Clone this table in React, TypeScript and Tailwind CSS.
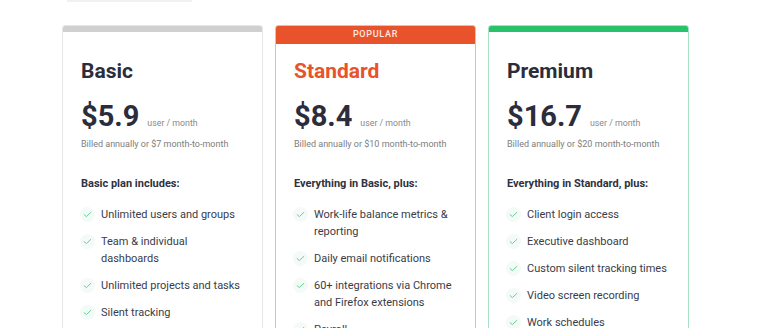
import React from "react";

type Plan = {
  name: string;
  price: string;
  billed: string;
  heading: string;
  items: string[];
  variant: "basic" | "standard" | "premium";
};

const plans: Plan[] = [
  {
    name: "Basic",
    price: "$5.9",
    billed: "Billed annually or $7 month-to-month",
    heading: "Basic plan includes:",
    items: [
      "Unlimited users and groups",
      "Team & individual dashboards",
      "Unlimited projects and tasks",
      "Silent tracking",
    ],
    variant: "basic",
  },
  {
    name: "Standard",
    price: "$8.4",
    billed: "Billed annually or $10 month-to-month",
    heading: "Everything in Basic, plus:",
    items: [
      "Work-life balance metrics & reporting",
      "Daily email notifications",
      "60+ integrations via Chrome and Firefox extensions",
      "Payroll",
    ],
    variant: "standard",
  },
  {
    name: "Premium",
    price: "$16.7",
    billed: "Billed annually or $20 month-to-month",
    heading: "Everything in Standard, plus:",
    items: [
      "Client login access",
      "Executive dashboard",
      "Custom silent tracking times",
      "Video screen recording",
      "Work schedules",
    ],
    variant: "premium",
  },
];

function Check() {
  return (
    <span className="ml-[-1px] mr-[6px] mt-[1px] flex h-[15px] w-[15px] shrink-0 items-center justify-center rounded-full bg-[#f4faf7]">
      <svg width="9" height="7" viewBox="0 0 9 7" fill="none">
        <path
          d="M1.2 3.7 L3.4 5.6 L7.8 1.4"
          stroke="#66cf98"
          strokeWidth="1"
          strokeLinecap="round"
          strokeLinejoin="round"
        />
      </svg>
    </span>
  );
}

function Card({ plan }: { plan: Plan }) {
  const border =
    plan.variant === "standard"
      ? "border-[#f3b8a8]"
      : plan.variant === "premium"
      ? "border-[#a6e2c3]"
      : "border-[#e6e6e6]";
  return (
    <div
      className={`flex w-[201px] shrink-0 flex-col overflow-hidden rounded-t-[3px] border bg-white ${border}`}
    >
      {plan.variant === "basic" && <div className="h-[6px] bg-[#d0d0d0]" />}
      {plan.variant === "premium" && <div className="h-[6px] bg-[#27c269]" />}
      {plan.variant === "standard" && (
        <div className="flex h-[18px] items-center justify-center bg-[#e9532b] text-[9px] font-medium tracking-[0.08em] text-[#fde9e2]">
          POPULAR
        </div>
      )}
      <div
        className={`flex flex-col px-[18px] pb-[40px] ${
          plan.variant === "standard" ? "pt-[15px]" : "pt-[27px]"
        }`}
      >
        <div
          className={`text-[21px] font-bold leading-[24px] ${
            plan.variant === "standard" ? "text-[#e8532c]" : "text-[#2b2d3c]"
          }`}
        >
          {plan.name}
        </div>
        <div className="mt-[17px] flex items-baseline">
          <span className="text-[29px] font-bold leading-[32px] text-[#2b2d3c]">
            {plan.price}
          </span>
          <span className="ml-[8px] text-[8.8px] text-[#8a8a8a]">user / month</span>
        </div>
        <div className="mt-[6px] text-[9px] leading-[12px] text-[#7d7d7d]">{plan.billed}</div>
        <div className="mt-[27px] text-[11px] font-bold leading-[14px] text-[#2f3140]">
          {plan.heading}
        </div>
        <ul className="mt-[15px] flex flex-col gap-[10px]">
          {plan.items.map((it) => (
            <li key={it} className="flex items-start text-[11px] leading-[17px] text-[#3a3c48]">
              <Check />
              <span>{it}</span>
            </li>
          ))}
        </ul>
      </div>
    </div>
  );
}

export default function App() {
  return (
    <div
      className="h-[328px] w-[768px] overflow-hidden bg-white"
      style={{ fontFamily: "Roboto, 'Noto Sans', sans-serif" }}
    >
      <div className="ml-[67px] h-[2px] w-[125px] bg-[#f1f1f1]" />
      <div className="mt-[23px] flex gap-[12px] pl-[62px]">
        {plans.map((p) => (
          <Card key={p.name} plan={p} />
        ))}
      </div>
    </div>
  );
}
